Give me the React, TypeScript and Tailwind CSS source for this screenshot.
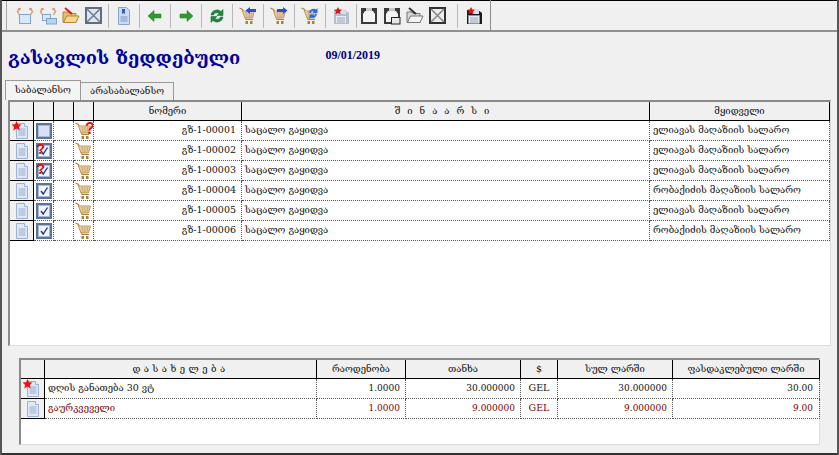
import type { ReactNode } from 'react'

const GE = 'font-["DejaVu_Serif","DejaVu_Sans",serif]'

function DocIcon({ star }: { star?: boolean }) {
  return (
    <svg width="18" height="18" viewBox="0 0 18 18" className="overflow-visible">
      <path d="M3.500 1.500h8l3 3v12h-11z" fill="#dfe9f6" stroke="#9db2d4" />
      <path d="M11.500 1.500v3h3" fill="#fff" stroke="#9db2d4" />
      <path d="M5.500 7h7M5.500 9h7M5.500 11h7M5.500 13h7" stroke="#98add0" />
      {star && <path d="M3.500-1l1.500 3.200 3.500.4-2.600 2.300.8 3.500-3.200-1.800-3.200 1.800.8-3.500L-1.500 2.600 2 2.200z" fill="#f01010" />}
    </svg>
  )
}

function CheckIcon({ checked, mark }: { checked?: boolean; mark?: boolean }) {
  return (
    <svg width="16" height="16" viewBox="0 0 16 16" className="overflow-visible">
      <rect x="0" y="0" width="16" height="16" fill="#5d7397" />
      <rect x="2.500" y="2.500" width="11" height="11" fill={checked ? '#f0f4fb' : '#d6e1f3'} stroke="#a8b9d6" />
      {checked && <path d="M5 8l2.200 3L11.500 4.500" fill="none" stroke="#1c2f8f" strokeWidth="1.300" />}
      {mark && <text x="0" y="11" fontSize="15" fontWeight="700" fill="#e01010" fontFamily="Liberation Sans">?</text>}
    </svg>
  )
}

function Cart({ color = '#c49a5c' }: { color?: string }) {
  return (
    <>
      <path d="M0.500 1l3 1.500 3.500 10h7" fill="none" stroke="#a8823f" strokeWidth="1.200" />
      <path d="M3.500 4h12l-2 7H6z" fill="#f6e6c0" stroke={color} />
      <path d="M4.500 6h10M5 8h9M5.500 10h8M7 4l1.200 7M10 4v7M13 4l-1.200 7" stroke={color} strokeWidth="0.700" />
      <rect x="6.500" y="14" width="2.500" height="3" fill="#a8823f" />
      <rect x="11" y="14" width="2.500" height="3" fill="#a8823f" />
    </>
  )
}

function CartIcon({ mark }: { mark?: boolean }) {
  return (
    <svg width="18" height="18" viewBox="0 0 18 18" className="overflow-visible">
      <Cart />
      {mark && <text x="10" y="12" fontSize="16" fontWeight="700" fill="#e01010" fontFamily="Liberation Sans">?</text>}
    </svg>
  )
}

function BagIcon({ dark, double }: { dark?: boolean; double?: boolean }) {
  if (dark) {
    return (
      <svg width="18" height="18" viewBox="0 0 18 18">
        <rect x="1" y="1" width="16" height="16" fill="#3a3a3a" />
        <path d="M5 4h8l2 3v8H3V7z" fill="#f4f4f4" />
        <path d="M6 1h6v3H6z" fill="#c8c8c8" />
        {double && <rect x="8.500" y="10.500" width="8.500" height="6.500" fill="#e8e8e8" stroke="#222" />}
      </svg>
    )
  }
  return (
    <svg width="18" height="18" viewBox="0 0 18 18">
      <rect x="3.500" y="7.500" width={double ? 8 : 11} height={double ? 6 : 9} fill="#d6e9f9" stroke="#7fa3cc" />
      <path d="M3.500 8L1.500 4.500 3 2M14.500 8l2-3.500L15 2" fill="none" stroke="#c9a878" strokeWidth="1.500" />
      <circle cx="3.500" cy="2" r="1.300" fill="#e8848a" />
      <circle cx="14.500" cy="2" r="1.300" fill="#e8848a" />
      {double && <rect x="7.500" y="11.500" width="10" height="5.500" fill="#b4d4f0" stroke="#7fa3cc" />}
    </svg>
  )
}

function OpenIcon({ dark }: { dark?: boolean }) {
  return (
    <svg width="18" height="18" viewBox="0 0 18 18">
      <path d="M1 5h5l1 1.500h7v9H1z" fill={dark ? '#d8d8d8' : '#e8bd6a'} stroke={dark ? '#777' : '#b08838'} />
      <path d="M1.500 15.500l3-6.500h12.500l-3 6.500z" fill={dark ? '#f4f4f4' : '#f6d78e'} stroke={dark ? '#777' : '#b08838'} />
      <path d="M3 1l7 6" stroke={dark ? '#333' : '#e01818'} strokeWidth="2" />
    </svg>
  )
}

function CrossIcon({ dark }: { dark?: boolean }) {
  return (
    <svg width="17" height="17" viewBox="0 0 17 17">
      <rect x="1" y="1" width="15" height="15" fill={dark ? '#ececec' : '#dfe6ee'} stroke={dark ? '#303030' : '#5d6d85'} strokeWidth="2" />
      <path d="M2 2l13 13M15 2L2 15" stroke={dark ? '#888' : '#6d7d95'} strokeWidth="1.600" />
    </svg>
  )
}

function PageIcon() {
  return (
    <svg width="14" height="18" viewBox="0 0 14 18">
      <path d="M1.500.5h8l3 3v14h-11z" fill="#c9dcf3" stroke="#8ba2cb" />
      <path d="M5 2h3v5L6.500 6 5 7z" fill="#3b5ca8" />
      <path d="M3.500 10h7M3.500 12h7M3.500 14h7" stroke="#7d96c0" />
    </svg>
  )
}

function ArrowIcon({ dir }: { dir: 'left' | 'right' }) {
  return (
    <svg width="14" height="12" viewBox="0 0 14 12">
      <path
        d={dir === 'left' ? 'M0 6l6-5.500V4h7v4H6v3.500z' : 'M14 6L8 .5V4H1v4h7v3.500z'}
        fill="#2f9a2f"
        stroke="#1f7a1f"
        strokeWidth="0.5"
      />
    </svg>
  )
}

function RefreshIcon() {
  return (
    <svg width="16" height="16" viewBox="0 0 16 16">
      <path d="M2 7a6 6 0 0 1 10-3.500L14 1.500v6H8l2-2a3.500 3.500 0 0 0-5.500 1.500z" fill="#1f8a3c" stroke="#0f5f28" strokeWidth="0.5" />
      <path d="M14 9a6 6 0 0 1-10 3.500L2 14.500v-6h6l-2 2a3.500 3.500 0 0 0 5.500-1.500z" fill="#1f8a3c" stroke="#0f5f28" strokeWidth="0.5" />
    </svg>
  )
}

function CartArrowIcon({ kind }: { kind: 'left' | 'right' | 'both' }) {
  return (
    <svg width="18" height="18" viewBox="0 0 18 18">
      <Cart />
      <circle cx="13" cy="9" r="1.500" fill="#ee9ad0" />
      {kind === 'left' && <path d="M6.500 3.500L11 0v2h6v3h-6v2z" fill="#2a4ae0" />}
      {kind === 'right' && <path d="M17.500 3.500L13 0v2H7v3h6v2z" fill="#2a4ae0" />}
      {kind === 'both' && (
        <>
          <path d="M8 6a4.500 4.500 0 0 1 7-3.500L16.500 1v5h-5l1.500-1.500a2.500 2.500 0 0 0-3.500 1.500z" fill="#2a6ae0" />
          <path d="M16 7a4.500 4.500 0 0 1-6 3.500L8.500 12V7.500h5L12 9a2.500 2.500 0 0 0 2.500-2z" fill="#2a6ae0" />
        </>
      )}
    </svg>
  )
}

function SaveIcon({ dark }: { dark?: boolean }) {
  return (
    <svg width="17" height="18" viewBox="0 0 17 18">
      <path d="M1 3h11l4 3v11H1z" fill={dark ? '#1a1a1a' : '#b4bfce'} />
      <rect x="2.500" y="8.500" width="11" height="8" fill="#e8eef6" stroke="#9aa6b6" strokeWidth="0.5" />
      <path d="M4 11h8M4 13h8M4 15h8" stroke="#9aa6b6" />
      <rect x="6" y="2" width="7" height="5" fill="#d8e0ea" />
      <path d="M5 0l1.300 2.500 2.700.3-2 1.800.6 2.700L5 6 2.400 7.300l.6-2.700-2-1.800 2.700-.3z" fill="#d81818" />
    </svg>
  )
}

function Tool({ children, w = 'w-[30px]' }: { children: ReactNode; w?: string }) {
  return <div className={`flex h-[29px] items-center justify-center ${w}`}>{children}</div>
}

function Sep() {
  return <div className="h-[24px] w-px bg-[#b8b8b8]" />
}

function Toolbar() {
  return (
    <div className="flex h-[32px] items-center border-t border-b-2 border-t-black border-b-[#8f8f8f] bg-[#f0f0f0]">
      <div className="ml-[4px] mr-[6px] h-[29px] w-px bg-[#a8a8a8]" />
      <Tool w="w-[23px]"><BagIcon /></Tool>
      <Tool w="w-[23px]"><BagIcon double /></Tool>
      <Tool w="w-[23px]"><OpenIcon /></Tool>
      <Tool w="w-[23px]"><CrossIcon /></Tool>
      <div className="w-[3px]" />
      <Sep />
      <Tool><PageIcon /></Tool>
      <Sep />
      <Tool><ArrowIcon dir="left" /></Tool>
      <Sep />
      <Tool><ArrowIcon dir="right" /></Tool>
      <Sep />
      <Tool><RefreshIcon /></Tool>
      <Sep />
      <Tool><CartArrowIcon kind="left" /></Tool>
      <Sep />
      <Tool><CartArrowIcon kind="right" /></Tool>
      <Sep />
      <Tool><CartArrowIcon kind="both" /></Tool>
      <Sep />
      <Tool><SaveIcon /></Tool>
      <Sep />
      <Tool w="w-[23px]"><BagIcon dark /></Tool>
      <Tool w="w-[23px]"><BagIcon dark double /></Tool>
      <Tool w="w-[23px]"><OpenIcon dark /></Tool>
      <Tool w="w-[23px]"><CrossIcon dark /></Tool>
      <div className="w-[8px]" />
      <Sep />
      <Tool w="w-[32px]"><SaveIcon dark /></Tool>
      <div className="h-[31px] w-px bg-[#8f8f8f]" />
    </div>
  )
}

const topCols = 'grid-cols-[24px_20px_20px_20px_148px_408px_180px]'
const bottomCols = 'grid-cols-[24px_272px_89px_115px_37px_115px_147px]'

function HeadCell({ children, className = '' }: { children?: ReactNode; className?: string }) {
  return (
    <div className={`flex items-center justify-center border-r border-b border-r-black border-b-black bg-[#f0f0f0] ${className}`}>
      {children}
    </div>
  )
}

function RowHead({ children }: { children: ReactNode }) {
  return (
    <div className="flex items-center justify-center border-r border-b border-r-black border-b-black bg-[#f0f0f0]">
      {children}
    </div>
  )
}

function Cell({ children, className = '' }: { children?: ReactNode; className?: string }) {
  return (
    <div className={`flex items-center overflow-hidden whitespace-nowrap border-r border-b border-dotted border-[#555] px-[3px] ${className}`}>
      {children}
    </div>
  )
}

const invoices = [
  { no: '00001', star: true, checked: false, mark: false, cartMark: true, buyer: 'ელიავას მაღაზიის სალარო' },
  { no: '00002', star: false, checked: true, mark: true, cartMark: false, buyer: 'ელიავას მაღაზიის სალარო' },
  { no: '00003', star: false, checked: true, mark: true, cartMark: false, buyer: 'ელიავას მაღაზიის სალარო' },
  { no: '00004', star: false, checked: true, mark: false, cartMark: false, buyer: 'რობაქიძის მაღაზიის სალარო' },
  { no: '00005', star: false, checked: true, mark: false, cartMark: false, buyer: 'ელიავას მაღაზიის სალარო' },
  { no: '00006', star: false, checked: true, mark: false, cartMark: false, buyer: 'რობაქიძის მაღაზიის სალარო' },
]

const lines = [
  { name: 'დღის განათება 30 ვტ', qty: '1.0000', sum: '30.000000', total: '30.000000', disc: '30.00', star: true, red: false },
  { name: 'გაურკვეველი', qty: '1.0000', sum: '9.000000', total: '9.000000', disc: '9.00', star: false, red: true },
]

export default function App() {
  return (
    <div className={`flex h-[455px] w-[839px] flex-col overflow-hidden border-l-2 border-r-2 border-l-[#555] border-r-[#555] bg-[#f0f0f0] text-[9.5px] text-[#111] ${GE}`}>
      <Toolbar />

      <div className="flex h-[39px] items-end pl-[6px]">
        <h1 className="text-[18.4px] leading-[27px] font-bold text-[#0000a0]">გასავლის ზედდებული</h1>
        <span className='ml-[85px] mb-[7px] font-["Liberation_Serif",serif] text-[12px] font-bold text-[#000080]'>09/01/2019</span>
      </div>

      <div className="mt-[6px] flex h-[23px] items-end pl-[3px]">
        <div className="flex h-[20px] w-[76px] items-center justify-center border-t border-l border-r border-[#999] bg-[#f4f4f4]">საბალანსო</div>
        <div className="flex h-[18px] w-[93px] items-center justify-center border-t border-r border-[#999] bg-[#f0f0f0]">არასაბალანსო</div>
      </div>

      <div className="ml-[6px] mr-[6px] flex h-[246px] flex-col border-t-2 border-l-2 border-t-[#8a8a8a] border-l-[#8a8a8a] border-r border-b border-r-[#ddd] border-b-[#ddd] bg-white">
        <div className={`grid h-[19px] ${topCols}`}>
          <HeadCell />
          <HeadCell />
          <HeadCell />
          <HeadCell />
          <HeadCell>ნომერი</HeadCell>
          <HeadCell className="tracking-[7px]">შინაარსი</HeadCell>
          <HeadCell>მყიდველი</HeadCell>
        </div>
        {invoices.map((row) => (
          <div key={row.no} className={`grid h-[20px] ${topCols}`}>
            <RowHead><DocIcon star={row.star} /></RowHead>
            <Cell className="justify-center !px-0"><CheckIcon checked={row.checked} mark={row.mark} /></Cell>
            <Cell />
            <Cell className="justify-center !px-0"><CartIcon mark={row.cartMark} /></Cell>
            <Cell className="justify-end !pr-[5px]">გზ-1-{row.no}</Cell>
            <Cell>საცალო გაყიდვა</Cell>
            <Cell>{row.buyer}</Cell>
          </div>
        ))}
      </div>

      <div className="ml-[17px] mr-[17px] mt-[12px] flex h-[87px] flex-col border-t-2 border-l-2 border-t-[#8a8a8a] border-l-[#8a8a8a] border-r border-b border-r-[#ddd] border-b-[#ddd] bg-white">
        <div className={`grid h-[19px] ${bottomCols}`}>
          <HeadCell />
          <HeadCell className="tracking-[3.500px]">დასახელება</HeadCell>
          <HeadCell>რაოდენობა</HeadCell>
          <HeadCell>თანხა</HeadCell>
          <HeadCell>$</HeadCell>
          <HeadCell>სულ ლარში</HeadCell>
          <HeadCell>ფასდაკლებული ლარში</HeadCell>
        </div>
        {lines.map((row) => {
          const tone = row.red ? 'text-[#800000]' : ''
          return (
            <div key={row.name} className={`grid h-[20px] ${bottomCols}`}>
              <RowHead><DocIcon star={row.star} /></RowHead>
              <Cell className={tone}>{row.name}</Cell>
              <Cell className={`justify-end !pr-[5px] text-[9px] ${tone}`}>{row.qty}</Cell>
              <Cell className={`justify-end !pr-[5px] text-[9px] ${tone}`}>{row.sum}</Cell>
              <Cell className={`justify-center ${tone}`}>GEL</Cell>
              <Cell className={`justify-end !pr-[5px] text-[9px] ${tone}`}>{row.total}</Cell>
              <Cell className={`justify-end !pr-[6px] text-[9px] ${tone}`}>{row.disc}</Cell>
            </div>
          )
        })}
      </div>

      <div className="mt-auto h-[2px] bg-[#333]" />
    </div>
  )
}
